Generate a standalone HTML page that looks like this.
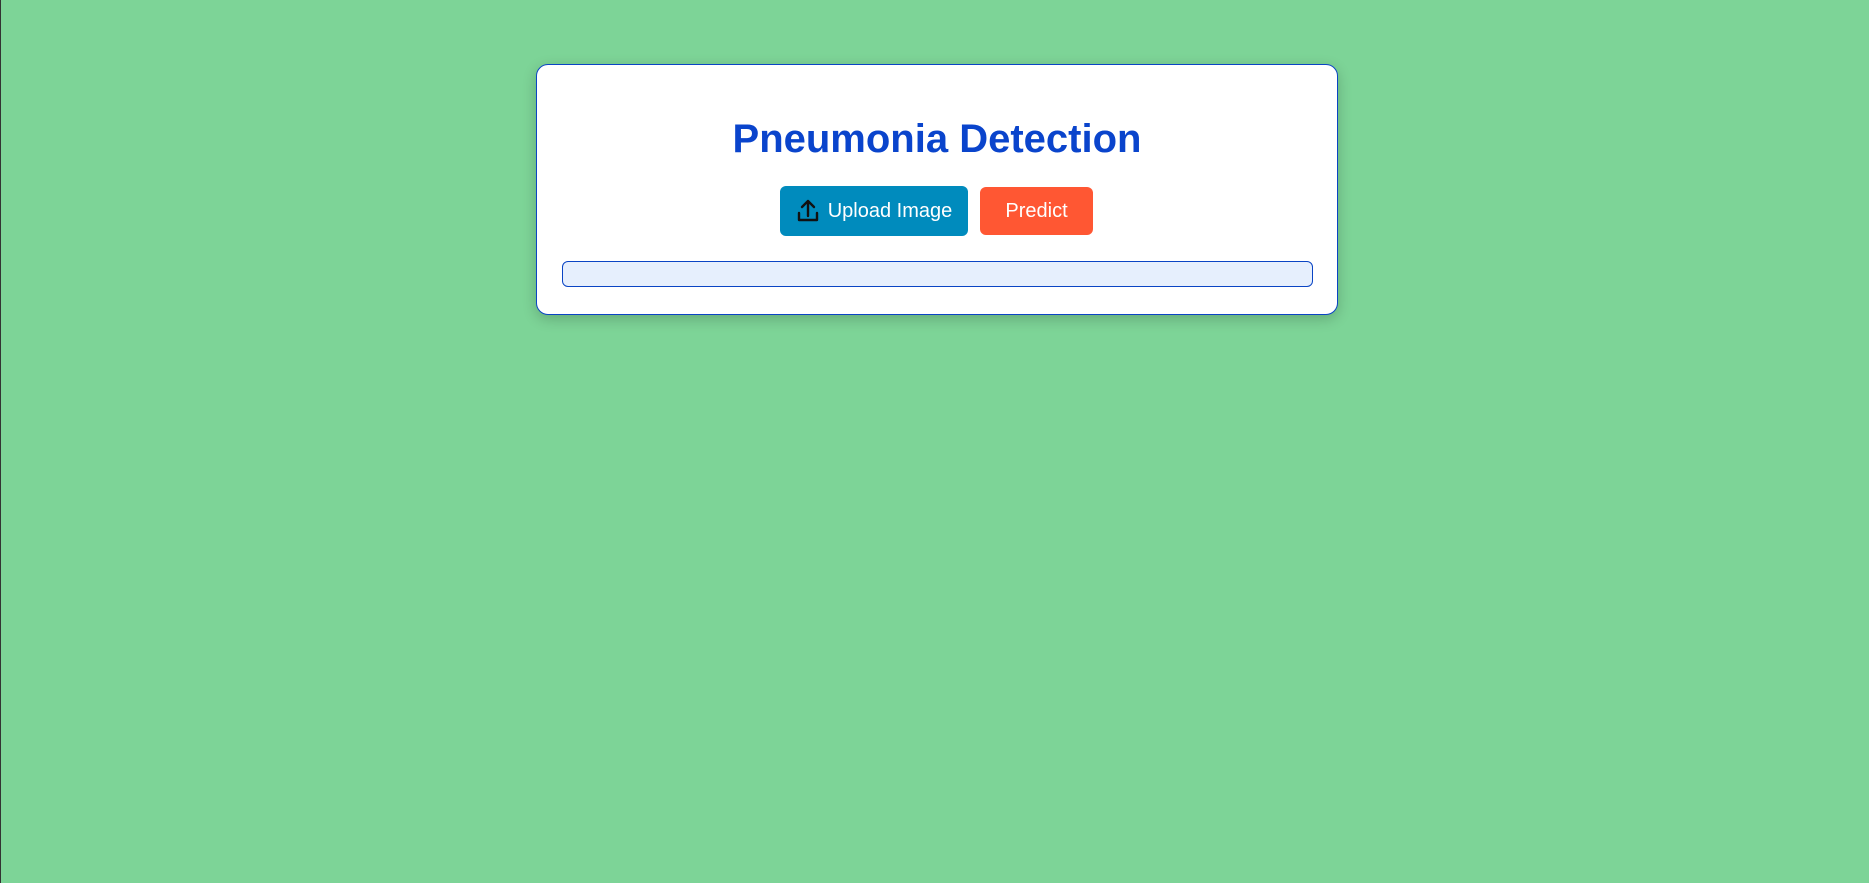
<!DOCTYPE html>
<html><head><style>
html,body{margin:0;padding:0;width:1869px;height:883px;background:#7dd497;overflow:hidden;font-family:"Liberation Sans",Arial,sans-serif;}
body{border-left:1px solid #333;box-sizing:border-box;}
.card{position:absolute;left:536px;top:64px;width:802px;height:251px;box-sizing:border-box;background:#fff;border:1px solid #0a44c4;border-radius:12px;box-shadow:0 4px 14px rgba(0,0,0,0.2);}
h1{position:absolute;left:0;right:0;top:50px;margin:0;text-align:center;color:#0a44cc;font-size:40px;font-weight:bold;line-height:48px;}
.btn{position:absolute;border-radius:6px;color:#fff;font-size:20px;display:flex;align-items:center;justify-content:center;}
.up{left:243px;top:121px;width:188px;height:50px;background:#008bbd;}
.pr{left:443px;top:122px;width:113px;height:48px;background:#ff5733;}
.bar{position:absolute;left:25px;top:196px;width:751px;height:26px;box-sizing:border-box;background:#e6effd;border:1px solid #0a44c4;border-radius:6px;}
</style></head><body>
<div class="card">
<h1>Pneumonia Detection</h1>
<div class="btn up"><svg width="24" height="26" viewBox="0 0 24 26" style="margin-right:8px"><path d="M12 18V3M6 9l6-6 6 6M3 15v7h18v-7" fill="none" stroke="#111" stroke-width="2.4" stroke-linecap="round" stroke-linejoin="round"/></svg>Upload Image</div>
<div class="btn pr">Predict</div>
<div class="bar"></div>
</div>
</body></html>
